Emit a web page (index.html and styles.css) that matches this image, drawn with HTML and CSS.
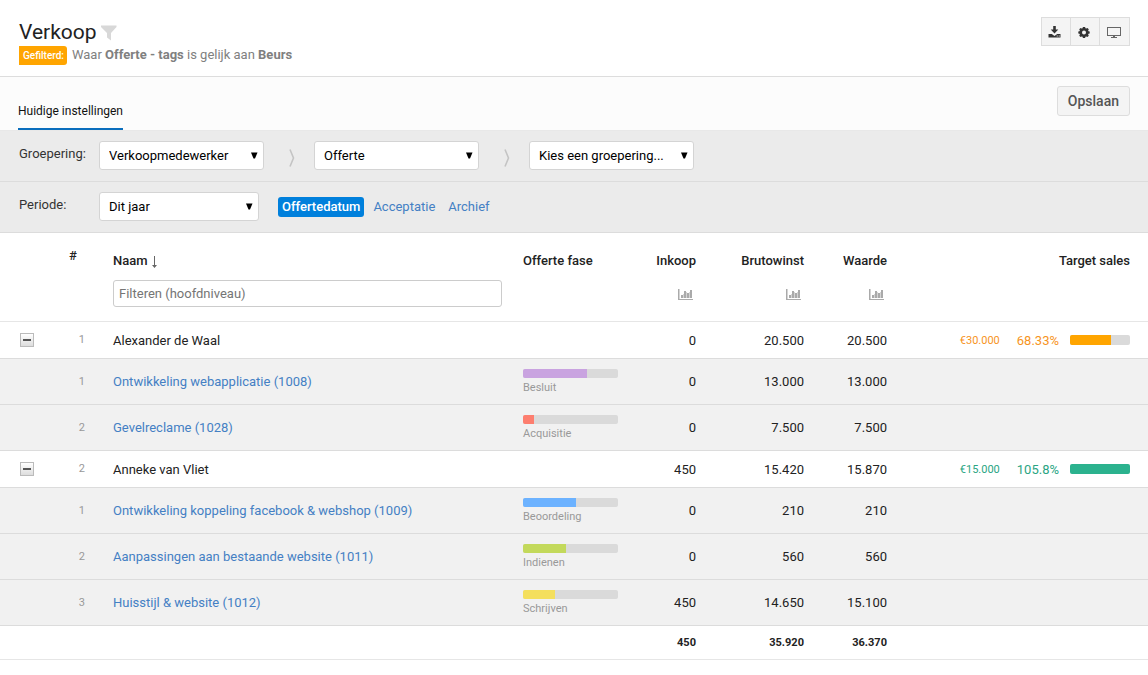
FILE: index.html
```html
<!DOCTYPE html>
<html lang="nl">
<head>
<meta charset="utf-8">
<title>Verkoop</title>
<link rel="stylesheet" href="styles.css">
</head>
<body>
<svg class="defs" aria-hidden="true">
  <symbol id="chart" viewBox="0 0 16 12"><path d="M0 0h1v10h14v1H0z"/><path d="M3 6h2v3H3zM6 2h2v7H6zM9 4h2v5H9zM12 1h2v8h-2z"/><path opacity=".5" d="M1 0h1v10H1zM5 5h1v4H5zM8 3h1v6H8zM11 3h1v6h-1z"/></symbol>
  <symbol id="caret" viewBox="0 0 7 7"><path d="M0 0.500h6.500L4 6.500H2.500z"/></symbol>
  <symbol id="chevron" viewBox="0 0 6 18"><path d="M1 0.500L4.500 9L1 17.500" fill="none" stroke="currentColor" stroke-width="1.600"/></symbol>
</svg>

<header class="page-header">
  <div class="heading">
    <div class="title-row">
      <h1 class="title">Verkoop</h1>
      <svg class="funnel" viewBox="0 0 16 16" aria-hidden="true"><path d="M0 0.500h15.500v1.500L10 8v7.500L6 12.500V8L0 2z"/></svg>
    </div>
    <p class="filter-line"><span class="filter-badge">Gefilterd:</span><span>Waar <b>Offerte - tags</b> is gelijk aan <b>Beurs</b></span></p>
  </div>
  <div class="tools">
    <button class="tool" aria-label="Downloaden"><svg viewBox="0 0 14 14" aria-hidden="true"><path d="M5.200 1h2.600v3.500h2.500L6.500 8.500 2.700 4.500h2.500z"/><path d="M0.500 9h3.300L6.500 11l2.700-2H12.500v3.500H0.500zM8.700 10.500v1h1v-1zM10.700 10.500v1h1v-1z" fill-rule="evenodd"/></svg></button>
    <button class="tool" aria-label="Instellingen"><svg viewBox="0 0 14 14" aria-hidden="true"><path fill-rule="evenodd" d="M5.900 1.900h2.200l.3 1.300.9.400 1.100-.7 1.400 1.400-.7 1.100.4.900 1.200.3v1.800l-1.200.3-.4.900.7 1.100-1.400 1.400-1.100-.7-.9.400-.3 1.200H5.900l-.3-1.200-.9-.4-1.100.7-1.400-1.400.7-1.100-.4-.9L1.300 8.400V6.600l1.200-.3.4-.9-.7-1.100 1.400-1.400 1.100.7.900-.4zM7 5.500a2 2 0 1 0 0 4 2 2 0 0 0 0-4z"/></svg></button>
    <button class="tool" aria-label="Presentatie"><svg class="screen" viewBox="0 0 14 14" aria-hidden="true"><path fill-rule="evenodd" d="M0 2h14v9H0zM1 3v7h12V3z"/><path d="M6 11h2v1h2v1H4v-1h2z"/></svg></button>
  </div>
</header>

<nav class="tabs">
  <a class="tab" href="#">Huidige instellingen</a>
  <button class="save">Opslaan</button>
</nav>

<div class="settings-panel">
<section class="settings">
  <label class="settings-label" for="group1">Groepering:</label>
  <div class="settings-row">
    <span class="select"><select id="group1"><option>Verkoopmedewerker</option></select><svg><use href="#caret"/></svg></span>
    <svg class="chevron" aria-hidden="true"><use href="#chevron"/></svg>
    <span class="select"><select aria-label="Tweede groepering"><option>Offerte</option></select><svg><use href="#caret"/></svg></span>
    <svg class="chevron" aria-hidden="true"><use href="#chevron"/></svg>
    <span class="select"><select aria-label="Derde groepering"><option>Kies een groepering...</option></select><svg><use href="#caret"/></svg></span>
  </div>
</section>
<section class="settings">
  <label class="settings-label" for="period">Periode:</label>
  <div class="settings-row">
    <span class="select select-period"><select id="period"><option>Dit jaar</option></select><svg><use href="#caret"/></svg></span>
    <div class="date-links">
      <a class="date-link active" href="#">Offertedatum</a>
      <a class="date-link" href="#">Acceptatie</a>
      <a class="date-link" href="#">Archief</a>
    </div>
  </div>
</section>
</div>

<table class="report">
  <colgroup><col class="c-toggle"><col class="c-num"><col><col class="c-phase"><col class="c-cost"><col class="c-gross"><col class="c-value"><col class="c-target"></colgroup>
  <thead>
    <tr>
      <th></th>
      <th class="hash">#</th>
      <th class="name">Naam <svg class="sort" viewBox="0 0 7 12" aria-hidden="true"><path d="M3 0h1v9h2L3.500 12 1 9h2z"/></svg><input class="filter" type="text" aria-label="Filteren" placeholder="Filteren (hoofdniveau)"></th>
      <th class="phase">Offerte fase</th>
      <th class="amount">Inkoop<svg class="chart"><use href="#chart"/></svg></th>
      <th class="amount">Brutowinst<svg class="chart"><use href="#chart"/></svg></th>
      <th class="amount">Waarde<svg class="chart"><use href="#chart"/></svg></th>
      <th class="target-head">Target sales</th>
    </tr>
  </thead>
  <tbody>
    <tr class="group"><td class="toggle-cell"><button class="toggle" aria-label="Inklappen"></button></td><td class="num">1</td><td class="name">Alexander de Waal</td><td></td><td class="amount">0</td><td class="amount">20.500</td><td class="amount">20.500</td><td class="target-cell"><div class="target orange"><span class="goal">€30.000</span><span class="percent">68.33%</span><span class="bar target-bar"><span class="fill" style="width:68.33%"></span></span></div></td></tr>
    <tr class="child"><td></td><td class="num">1</td><td class="name"><a href="#">Ontwikkeling webapplicatie (1008)</a></td><td class="phase"><span class="bar"><span class="fill purple" style="width:67%"></span></span>Besluit</td><td class="amount">0</td><td class="amount">13.000</td><td class="amount">13.000</td><td></td></tr>
    <tr class="child"><td></td><td class="num">2</td><td class="name"><a href="#">Gevelreclame (1028)</a></td><td class="phase"><span class="bar"><span class="fill red" style="width:12%"></span></span>Acquisitie</td><td class="amount">0</td><td class="amount">7.500</td><td class="amount">7.500</td><td></td></tr>
    <tr class="group"><td class="toggle-cell"><button class="toggle" aria-label="Inklappen"></button></td><td class="num">2</td><td class="name">Anneke van Vliet</td><td></td><td class="amount">450</td><td class="amount">15.420</td><td class="amount">15.870</td><td class="target-cell"><div class="target green"><span class="goal">€15.000</span><span class="percent">105.8%</span><span class="bar target-bar"><span class="fill" style="width:100%"></span></span></div></td></tr>
    <tr class="child"><td></td><td class="num">1</td><td class="name"><a href="#">Ontwikkeling koppeling facebook &amp; webshop (1009)</a></td><td class="phase"><span class="bar"><span class="fill blue" style="width:56%"></span></span>Beoordeling</td><td class="amount">0</td><td class="amount">210</td><td class="amount">210</td><td></td></tr>
    <tr class="child"><td></td><td class="num">2</td><td class="name"><a href="#">Aanpassingen aan bestaande website (1011)</a></td><td class="phase"><span class="bar"><span class="fill lime" style="width:45%"></span></span>Indienen</td><td class="amount">0</td><td class="amount">560</td><td class="amount">560</td><td></td></tr>
    <tr class="child"><td></td><td class="num">3</td><td class="name"><a href="#">Huisstijl &amp; website (1012)</a></td><td class="phase"><span class="bar"><span class="fill yellow" style="width:34%"></span></span>Schrijven</td><td class="amount">450</td><td class="amount">14.650</td><td class="amount">15.100</td><td></td></tr>
  </tbody>
  <tfoot>
    <tr><td></td><td></td><td></td><td></td><td class="amount">450</td><td class="amount">35.920</td><td class="amount">36.370</td><td></td></tr>
  </tfoot>
</table>
</body>
</html>
```
FILE: styles.css
```css
* { box-sizing: border-box; }
body { margin: 0; background: #fff; color: #222; font: 13px/20px Roboto, sans-serif; }
a { color: #4480c4; text-decoration: none; }
button, input, select { font: inherit; }
.defs { display: none; }

.page-header { display: flex; justify-content: space-between; align-items: flex-start; padding: 17px 18px 11px 19px; border-bottom: 1px solid #ddd; }
.title-row { display: flex; align-items: center; gap: 4px; }
.title { margin: 0; padding-top: 1px; font-size: 21px; line-height: 28px; font-weight: 400; }
.funnel { width: 16px; height: 16px; margin-top: 3px; fill: #d8d8d8; }
.filter-line { display: flex; gap: 5px; margin: 0; color: #808080; line-height: 18px; }
.filter-line b { font-weight: 700; }
.filter-badge { padding: 0 3px 0 4px; height: 19px; border-radius: 0 3px 3px 0; background: #ffa500; color: #fff; font-size: 10px; line-height: 20px; font-weight: 500; }
.tools { display: flex; }
.tool { display: grid; place-items: center; width: 30px; height: 29px; padding: 0 2px 0 0; border: 1px solid #ddd; background: #f4f4f4; }
.tool + .tool { margin-left: -1px; }
.tool:last-child { width: 31px; }
.tool svg { width: 14px; height: 14px; fill: #333; }
.tool .screen { fill: #666; }

.tabs { display: flex; justify-content: space-between; align-items: flex-end; padding: 9px 18px 0; background: #fcfcfc; }
.tab { padding: 9px 0 7px; border-bottom: 2px solid #0a6ebd; color: #111; font-size: 12px; }
.save { height: 30px; margin-bottom: 14px; padding: 0 10px; border: 1px solid #ddd; border-radius: 3px; background: #f4f4f4; color: #555; font-size: 14px; font-weight: 500; }

.settings-panel { border-top: 1px solid #e8e8e8; background: #ebebeb; }
.settings { display: flex; padding: 10px 18px 11px 19px; border-bottom: 1px solid #dcdcdc; }
.settings-label { width: 80px; padding-top: 3px; color: #333; }
.settings-row { display: flex; align-items: center; }
.select { display: grid; align-items: center; width: 165px; height: 29px; }
.select-period { width: 160px; margin-right: 19px; }
.select > * { grid-area: 1 / 1; }
.select select { appearance: none; width: 100%; height: 29px; padding: 0 9px; border: 1px solid #d4d4d4; border-radius: 3px; background: #fff; color: #000; }
.select svg { justify-self: end; width: 7px; height: 7px; margin-right: 6px; pointer-events: none; }
.chevron { width: 6px; height: 18px; margin: 5px 19px 0 25px; color: #c4c4c4; }
.date-links { display: flex; gap: 5px; padding-top: 1px; }
.date-link { padding: 0 4px; border-radius: 3px; }
.date-link.active { background: #0080dc; color: #fff; font-weight: 500; }

.report { width: 100%; table-layout: fixed; border-collapse: collapse; }
.c-toggle { width: 40px; }
.c-num { width: 46px; }
.c-phase { width: 121px; }
.c-cost { width: 73px; }
.c-gross { width: 108px; }
.c-value { width: 83px; }
.c-target { width: 261px; }
.report th, .report td { padding: 0; text-align: left; }
.report thead th { padding: 18px 0 14px; vertical-align: top; font-weight: 500; }
.report thead .hash { padding: 13px 0 0 29px; }
.report tr { border-bottom: 1px solid #e6e6e6; }
.report .group, .report .child { border-bottom-color: #dcdcdc; }
.group td { height: 37px; }
.group .name, .group .amount { padding-top: 1px; }
.child td { height: 46px; background: #f1f1f1; }
.report .name { padding-left: 27px; }
.report .amount, .report .target-head { text-align: right; }
.report .target-head { padding-right: 18px; }
.report .num { padding: 0 1px 0 0; text-align: right; color: #999; font-size: 11px; }
.report .group .num { padding-bottom: 1px; }
.sort { width: 7px; height: 12px; vertical-align: -3px; fill: #666; }
.filter { display: block; width: 100%; height: 27px; margin-top: 9px; padding: 0 5px; border: 1px solid #ccc; border-radius: 3px; color: #222; font-weight: 400; }
.filter::placeholder { color: #757575; }
.report .phase { padding-left: 21px; }
.chart { display: block; width: 16px; height: 12px; margin: 18px 2px 0 auto; fill: #aaa; }
.toggle { display: grid; place-items: center; width: 14px; height: 14px; margin-left: 20px; padding: 0; border: 1px solid #bbb; background: linear-gradient(#fff, #ddd); }
.toggle::before { content: ""; width: 8px; height: 2px; background: #555; }
.report .child .phase { padding-top: 4px; color: #999; font-size: 11px; line-height: 20px; }
.bar { display: block; width: 95px; height: 9px; border-radius: 2px; background: #dadada; overflow: hidden; }
.fill { display: block; height: 100%; }
.purple { background: #c9a3e0; }
.red { background: #fd7e6f; }
.blue { background: #6cb2ff; }
.lime { background: #c3d95b; }
.yellow { background: #f4df5d; }
.target { display: flex; justify-content: flex-end; align-items: center; padding-right: 18px; }
.goal { padding-top: 2px; margin-right: 17px; font-size: 11px; }
.percent { padding-top: 1px; margin-right: 11px; }
.target-bar { width: 60px; height: 10px; }
.orange { color: #f7941d; }
.orange .fill { background: #ffa500; }
.green { color: #2aa583; }
.green .fill { background: #2bb28e; }
.report tfoot td { height: 34px; padding-top: 1px; font-size: 11px; font-weight: 700; }
```
